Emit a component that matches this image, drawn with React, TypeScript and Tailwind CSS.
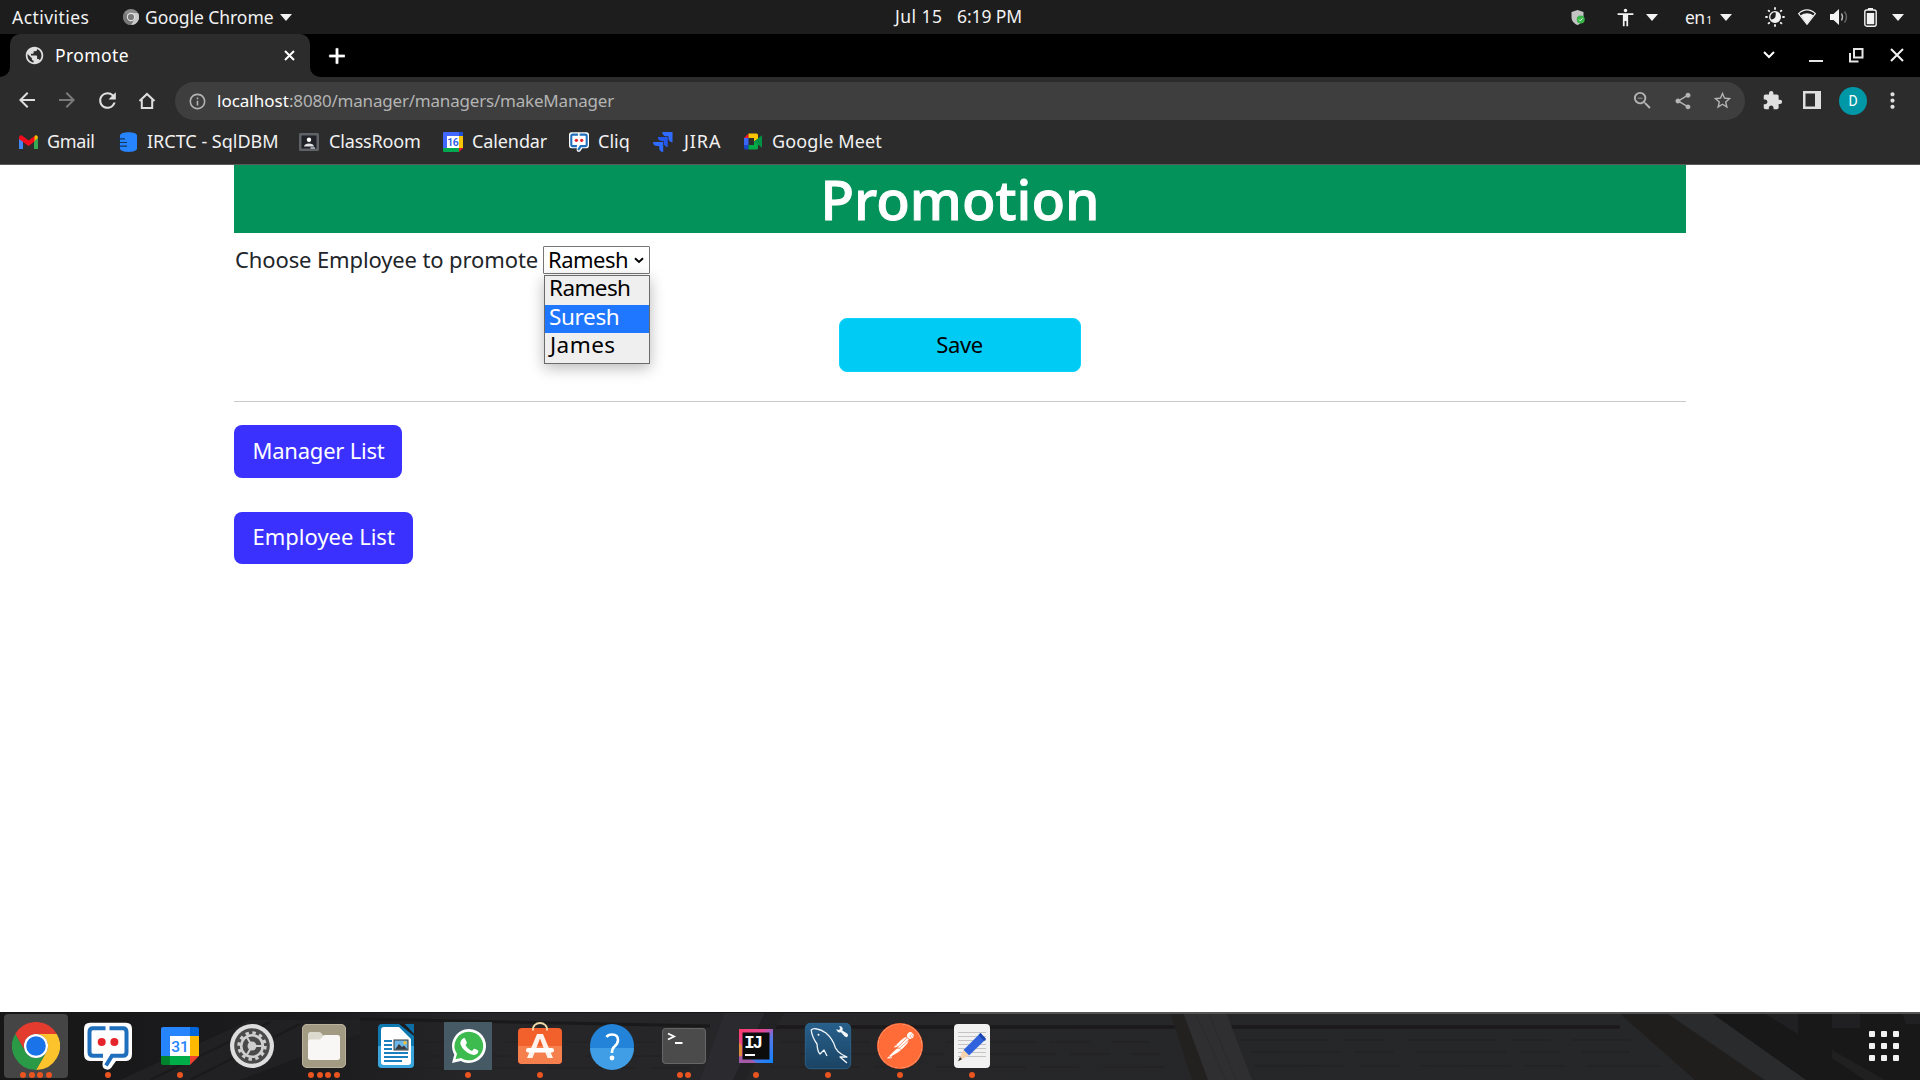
import React from "react";
import {
  MdAccessibility, MdAdd, MdArrowBack, MdArrowForward, MdExtension, MdInfoOutline,
  MdMoreVert, MdPublic, MdRefresh, MdShare, MdStarBorder, MdZoomOut,
} from "react-icons/md";
import { SiPostman } from "react-icons/si";

/* ---------- helpers ---------- */

function Caret({ className }: { className: string }) {
  return (
    <svg viewBox="0 0 12 7" className={`h-[7px] w-3 shrink-0 ${className}`}>
      <path d="M0 0H12L6 7Z" fill="#f2f2f2" />
    </svg>
  );
}

/* Fixed-size cell that keeps its icon centred. */
function Cell({ className, children }: { className: string; children: React.ReactNode }) {
  return <span className={`flex shrink-0 items-center justify-center ${className}`}>{children}</span>;
}

/* ---------- GNOME top bar ---------- */

function TopBar() {
  return (
    <header className="flex h-[34px] items-center bg-[#1d1d1d] pr-4 pl-3 text-[17.5px] leading-none whitespace-nowrap text-[#f2f2f2]">
      <span className="w-[77px] shrink-0 pt-0.5 tracking-[0.45px]">Activities</span>
      <svg viewBox="0 0 16 16" className="ml-[34px] size-4 shrink-0">
        <circle cx="8" cy="8" r="8" fill="#8b8b8b" />
        <path d="M8 4H15A8 8 0 0 1 8 16L11.4 10Z" fill="#c9c9c9" />
        <path d="M1.2 4A8 8 0 0 0 8 16L11 10.5Z" fill="#777" />
        <circle cx="8" cy="8" r="4.2" fill="#e4e4e4" />
        <circle cx="8" cy="8" r="3.1" fill="#777" />
      </svg>
      <span className="ml-1.5 w-[129px] shrink-0 pt-0.5 tracking-[-0.05px]">Google Chrome</span>
      <Caret className="ml-1.5" />
      <span className="ml-[603px] w-[49px] shrink-0 pb-px text-[17.5px] tracking-[0.45px]">Jul 15</span>
      <span className="ml-[13px] w-[66px] shrink-0 pb-px text-[17.5px] tracking-[-0.1px]">6:19 PM</span>

      <div className="ml-auto flex items-center">
        <svg viewBox="0 0 14 15" className="h-[15px] w-3.5">
          <path d="M6.5 0L12.5 2V7C12.5 11 10 13.5 6.5 15C3 13.5.5 11 .5 7V2Z" fill="#c4c4c4" />
          <circle cx="9.7" cy="9.5" r="4" fill="#39b54a" />
          <path d="M7.9 9.5L9.2 10.8L11.6 8.3" stroke="#e8ffe8" strokeWidth="1" fill="none" />
        </svg>
        <Cell className="ml-[32px] h-[22px] w-[16px]">
          <MdAccessibility className="size-[21px] shrink-0" />
        </Cell>
        <Caret className="ml-[13px]" />
        <span className="ml-[27px] w-[21px] pt-0.5 text-[17.5px] tracking-[-0.6px]">en</span>
        <span className="mt-[5px] w-[7px] text-[11px]">1</span>
        <Caret className="ml-[7px]" />
        <svg viewBox="0 0 20 20" className="ml-[33px] size-5 text-[#f2f2f2]">
          <g stroke="currentColor" strokeWidth="1.8" strokeLinecap="round">
            <path d="M10 1V2M10 18V19M1 10H2M18 10H19M3.6 3.6L4.2 4.2M15.8 15.8L16.4 16.4M3.6 16.4L4.2 15.8M15.8 4.2L16.4 3.6" />
          </g>
          <circle cx="10" cy="10" r="5.3" fill="none" stroke="currentColor" strokeWidth="1.3" />
          <path d="M10.5 4.7A5.3 5.3 0 0 1 10 15.3A5.3 5.3 0 0 1 5.5 12.8Q12 12.500 10.500 4.700Z" fill="currentColor" />
        </svg>
        <svg viewBox="0 0 18 16" className="ml-[13px] h-4 w-[18px]">
          <path d="M.6 4.6C5.5-.3 12.500-.3 17.400 4.600L9 15.300Z" fill="none" stroke="#f2f2f2" strokeWidth="1.200" />
          <path d="M2.600 6.600C6.500 3.500 11.500 3.500 15.400 6.600L9 15Z" fill="#f2f2f2" />
        </svg>
        <svg viewBox="0 0 18 18" className="ml-3.5 size-[18px]">
          <path d="M0 6H3.500L9 1V17L3.500 12H0Z" fill="#f2f2f2" />
          <path d="M11.500 5.500Q13.500 9 11.500 12.500" fill="none" stroke="#bbb" strokeWidth="1.400" />
          <path d="M14.500 3.500Q18.500 9 14.500 14.500" fill="none" stroke="#666" strokeWidth="1.400" />
        </svg>
        <svg viewBox="0 0 13 19" className="ml-4 h-[19px] w-[13px]">
          <rect x="4" y="0" width="5" height="2" fill="#f2f2f2" />
          <rect x=".8" y="2" width="11.400" height="16.200" rx="2" fill="none" stroke="#f2f2f2" strokeWidth="1.400" />
          <rect x="2.800" y="5" width="7.400" height="11.200" fill="#f2f2f2" />
        </svg>
        <Caret className="ml-[15px]" />
      </div>
    </header>
  );
}

/* ---------- Chrome window ---------- */

function TabStrip() {
  return (
    <div className="flex h-[43px] items-center bg-black text-[#f1f1f1]">
      <div className="relative ml-2.5 flex h-full w-[300px] items-center rounded-t-[10px] bg-[#2c2c2c] pl-3.5">
        <svg viewBox="0 0 10 10" className="absolute bottom-0 -left-2.5 size-2.5">
          <path d="M10 0V10H0A10 10 0 0 0 10 0Z" fill="#2c2c2c" />
        </svg>
        <svg viewBox="0 0 10 10" className="absolute -right-2.5 bottom-0 size-2.5">
          <path d="M0 0V10H10A10 10 0 0 1 0 0Z" fill="#2c2c2c" />
        </svg>
        <MdPublic className="size-[21px] shrink-0 text-[#dfdfdf]" />
        <span className="ml-2.5 w-[75px] text-[17.5px] leading-none tracking-[0.4px] text-white">Promote</span>
        <svg viewBox="0 0 11 11" className="ml-[154px] size-[11px] shrink-0">
          <path d="M1 1L10 10M10 1L1 10" stroke="white" strokeWidth="2" />
        </svg>
      </div>
      <MdAdd className="ml-[14px] size-[26px] shrink-0 stroke-white text-white [stroke-width:0] [&>path:last-child]:[stroke-width:0.6]" />
      <div className="ml-auto flex items-center pr-4 pb-px">
        <svg viewBox="0 0 12 8" className="h-2 w-3">
          <path d="M1 1L6 6L11 1" fill="none" stroke="white" strokeWidth="2" />
        </svg>
        <span className="mt-3 ml-[34px] h-0.5 w-[14px] bg-[#e6e6e6]" />
        <svg viewBox="0 0 15 15" className="ml-[26px] size-[15px]">
          <path d="M5 1H13.500V9.500H5Z" fill="none" stroke="#e6e6e6" strokeWidth="2" />
          <path d="M1 5V13.500H9.500" fill="none" stroke="#e6e6e6" strokeWidth="2" />
        </svg>
        <svg viewBox="0 0 14 14" className="ml-[26px] size-[14px]">
          <path d="M1 1L13 13M13 1L1 13" stroke="#f1f1f1" strokeWidth="2" />
        </svg>
      </div>
    </div>
  );
}

function Toolbar() {
  return (
    <div className="flex h-12 items-center text-[#dfdfdf]">
      <Cell className="ml-[15px] w-6 pb-0.5"><MdArrowBack className="size-[24px]" /></Cell>
      <Cell className="ml-4 w-6 pb-0.5 text-[#7a7a7a]"><MdArrowForward className="size-[24px]" /></Cell>
      <Cell className="ml-4 w-6 pb-0.5"><MdRefresh className="size-[25px] shrink-0" /></Cell>
      <Cell className="ml-4 w-6 pb-px">
        <svg viewBox="0 0 18 18" className="size-[18px]">
          <path d="M1.500 9L9 1.900L16.500 9" fill="none" stroke="currentColor" strokeWidth="2" />
          <path d="M3.800 7.500V15.900H14.200V7.500" fill="none" stroke="currentColor" strokeWidth="2" />
        </svg>
      </Cell>
      <div className="ml-4 flex h-[38px] w-[1570px] items-center rounded-full bg-[#3e3e3e] text-[#b4b4b4]">
        <MdInfoOutline className="ml-[13px] size-[19px] shrink-0" />
        <span className="ml-2.5 flex pb-0.5 text-[17px] leading-none whitespace-nowrap">
          <span className="w-[72px] text-white">localhost</span>
          <span className="tracking-[-0.2px]">:8080/manager/managers/makeManager</span>
        </span>
        <div className="ml-auto flex items-center pb-px">
          <MdZoomOut className="size-[23px]" />
          <MdShare className="ml-[19px] size-5" />
          <MdStarBorder className="mr-[12px] ml-[19px] size-[21px]" />
        </div>
      </div>
      <MdExtension className="mb-px ml-[17px] size-[21px]" />
      <svg viewBox="0 0 18 18" className="mb-0.5 ml-5 size-[18px]">
        <path fillRule="evenodd" d="M0 0H18V18H0ZM2.500 2.500V15.500H12V2.500Z" fill="currentColor" />
      </svg>
      <Cell className="ml-[18px] size-7 rounded-full bg-[#0097a7] font-['Roboto'] text-[14px] text-white">D</Cell>
      <MdMoreVert className="mb-px ml-[13px] size-[25px]" />
    </div>
  );
}

function Bookmarks() {
  return (
    <nav className="flex h-[33px] items-center text-[18px] leading-none whitespace-nowrap text-[#f1f1f1]">
      <svg viewBox="0 0 19 14" className="ml-[19px] h-3.5 w-[19px]">
        <path d="M0 3V14H4V6Z" fill="#4285f4" />
        <path d="M19 3V14H15V6Z" fill="#34a853" />
        <path d="M15 2L16 .6Q19-.5 19 3L15 6.500Z" fill="#fbbc04" />
        <path d="M0 3Q0-.5 3 .6L9.500 5.500L15.500 1V6.500L9.500 11L0 4Z" fill="#f50c1c" />
      </svg>
      <span className="ml-[9px] w-[52px] pb-0.5 tracking-[-0.35px]">Gmail</span>

      <svg viewBox="0 0 20 20" className="ml-[19px] size-5">
        <path d="M2 3.500C2-1 19-1 19 3.500V16.500C19 21 2 21 2 16.500Z" fill="#2684ff" />
        <path d="M0 6.800H7M1.500 10.500H9M0 14.200H9" stroke="#12355f" strokeWidth="1.200" />
      </svg>
      <span className="ml-[9px] w-[132px] pb-0.5">IRCTC - SqlDBM</span>

      <svg viewBox="0 0 20 18" className="ml-5 h-[18px] w-5">
        <rect width="20" height="18" rx="1.500" fill="#5f6368" />
        <rect x="2.500" y="2.500" width="15" height="13" fill="#1f2226" />
        <circle cx="10" cy="6.800" r="2.200" fill="white" />
        <path d="M5 13.500C5 9.500 15 9.500 15 13.500Z" fill="#dfe3e6" />
        <rect x="11.500" y="14" width="4.500" height="2" fill="#9aa0a6" />
      </svg>
      <span className="ml-2.5 w-[93px] pb-0.5 tracking-[-0.16px]">ClassRoom</span>

      <svg viewBox="0 0 20 20" className="ml-[21px] size-5">
        <path d="M0 1Q0 0 1 0H16V4H4V16H0Z" fill="#4169ff" />
        <path d="M16 0H19Q20 0 20 1V4H16Z" fill="#1d4fd8" />
        <path d="M16 4H20V16H16Z" fill="#ffc400" />
        <path d="M0 16H16V20H1Q0 20 0 19Z" fill="#00a94f" />
        <path d="M16 16H20L16 20Z" fill="#f5112a" />
        <rect x="4" y="4" width="12" height="12" fill="white" />
        <text x="9.800" y="13.800" fontSize="10.500" textAnchor="middle" fontFamily="Roboto" fontWeight="600" letterSpacing="-.5" fill="#2b5ce6">16</text>
      </svg>
      <span className="ml-[9px] w-[76px] pb-0.5 tracking-[-0.1px]">Calendar</span>

      <svg viewBox="0 0 48 48" className="ml-[21px] size-[20px]">
        <CliqShape stroke={5} />
      </svg>
      <span className="ml-[9px] w-[33px] pb-0.5">Cliq</span>

      <svg viewBox="0 0 20 20" className="ml-[22px] size-5">
        <path d="M9.200 0H19.500V10.300C17 10.300 15.500 8.600 15.500 6.300V4.200H13.400C10.800 4.200 9.200 2.500 9.200 0Z" fill="#2f6bff" />
        <path d="M4.800 5H14.800V15C12.200 15 10.800 13.300 10.800 11V9.100H8.900C6.400 9.100 4.800 7.500 4.800 5Z" fill="#2456e8" />
        <path d="M0 9.900H10.200V20C7.600 20 6.200 18.300 6.200 16V14H4.200C1.600 14 0 12.400 0 9.900Z" fill="#2f6bff" />
      </svg>
      <span className="ml-[11px] w-[39px] pb-0.5 tracking-[0.9px]">JIRA</span>

      <svg viewBox="0 0 18 16" className="ml-[21px] h-[17px] w-[18px]">
        <path d="M0 4.500L4.500 0V4.500Z" fill="#f5112a" />
        <path d="M0 4.500H4.500V11.500H0Z" fill="#3b66f5" />
        <path d="M0 11.500H4.500V16H1.500Q0 16 0 14.500Z" fill="#1746c8" />
        <path d="M4.500 0H12.500Q14 0 14 1.500V6L10 8V4.500H4.500Z" fill="#ffc400" />
        <path d="M4.500 11.500H10V8L14 6V14.500Q14 16 12.500 16H4.500Z" fill="#00ac47" />
        <path d="M10 8L18 1.800V14.200Z" fill="#009245" />
      </svg>
      <span className="ml-[10px] pb-0.5 tracking-[0.12px]">Google Meet</span>
    </nav>
  );
}

/* ---------- Page ---------- */

function Page() {
  return (
    <main className="flex-1 bg-white px-[234px] text-[22px] leading-none text-[#212529]">
      <h1 className="flex h-[68px] w-[1452px] items-center justify-center bg-[#039259] pb-0.5 text-[55px] font-medium text-white [-webkit-text-stroke:0.9px_white]">
        Promotion
      </h1>
      <div className="mt-[13px] flex h-7 items-center whitespace-nowrap">
        <span className="w-[309px] pb-0.5 pl-px tracking-[-0.12px]">Choose Employee to promote</span>
        <div className="relative flex h-7 w-[107px] items-center rounded-[1px] border border-[#767676] bg-white pl-1 text-black">
          <span className="w-[80px] pb-0.5 tracking-[-0.5px]">Ramesh</span>
          <svg viewBox="0 0 10 7" className="ml-[6px] h-[7px] w-2.5">
            <path d="M1 1.200L5 5L9 1.200" fill="none" stroke="black" strokeWidth="1.900" />
          </svg>
          <ul className="absolute top-7 left-0 h-[89px] w-[106px] border border-[#6b6b6b] bg-[#efefef] text-[22.5px] shadow-[0_4px_14px_rgba(0,0,0,0.28)]">
            <li className="flex h-[29px] items-center pb-1 pl-1 tracking-[-0.6px]">Ramesh</li>
            <li className="flex h-7 items-center bg-[#1f76ff] pb-1 pl-1 tracking-[-0.35px] text-white">Suresh</li>
            <li className="flex h-[30px] items-center pb-1.5 pl-[5px] tracking-[0.45px]">James</li>
          </ul>
        </div>
      </div>
      <button className="mx-auto mt-[44px] flex h-[54px] w-[242px] items-center justify-center rounded-[8px] border border-[#0dd3fb] bg-[#00cbf5] pr-px pb-0.5 tracking-[-0.4px] text-black">
        Save
      </button>
      <hr className="mt-[29px] w-[1452px] border-[#c8c9ca]" />
      <div className="flex flex-col items-start gap-[34px] pt-[23px] text-white">
        <a className="flex h-[53px] w-[168px] items-center rounded-[8px] bg-[#3a31ff] pb-1 pl-[18.5px] tracking-[-0.22px]">Manager List</a>
        <a className="flex h-[52px] w-[179px] items-center rounded-[8px] bg-[#3a31ff] pb-1 pl-[18.5px]">Employee List</a>
      </div>
    </main>
  );
}

/* ---------- Dock icons, each on a 48px grid ---------- */

function CliqShape({ stroke }: { stroke: number }) {
  return (
    <>
      <path d="M6 .8H42Q48 .8 48 6.800V32Q48 39 42 39H32L27 46Q24 49 20 46.500Q17.500 44 19 39H6Q0 39 0 32V6.800Q0 .8 6 .8Z" fill="white" />
      <g fill="none" stroke="#1f6fbd" strokeWidth={stroke}>
        <path d="M21.500 6.300H9Q5.500 6.300 5.500 10V30Q5.500 33.800 9 33.800H19" />
        <path d="M25.500 6.300H39Q42.500 6.300 42.500 10V30Q42.500 33.800 39 33.800H28L22 43.500" />
      </g>
      <circle cx="17.700" cy="20" r="4" fill="#e5252b" />
      <circle cx="30.400" cy="20" r="4" fill="#e5252b" />
    </>
  );
}

const chrome = (
  <>
    <path d="M24 12H44.800A24 24 0 0 0 3.200 12L13.600 30A12 12 0 0 1 24 12Z" fill="#e33b2e" />
    <path d="M44.800 12A24 24 0 0 1 24 48L34.400 30A12 12 0 0 0 24 12Z" fill="#fcc32c" />
    <path d="M3.200 12A24 24 0 0 0 24 48L34.400 30A12 12 0 0 1 13.600 30Z" fill="#2b9a47" />
    <circle cx="24" cy="24" r="12" fill="white" />
    <circle cx="24" cy="24" r="9.800" fill="#1a73e8" />
  </>
);

const calendar = (
  <>
    <path d="M5 7Q5 5 7 5H34V14H14V34H5Z" fill="#2684fc" />
    <path d="M34 5H41Q43 5 43 7V14H34Z" fill="#0066da" />
    <path d="M34 14H43V34H34Z" fill="#ffba00" />
    <path d="M5 34H14V43H7Q5 43 5 41Z" fill="#00832d" />
    <path d="M14 34H34V43H14Z" fill="#00ac47" />
    <path d="M34 34H43L34 43Z" fill="#ee4130" />
    <path d="M14 14H34V34H14Z" fill="white" />
    <text x="24" y="29.600" fontSize="15.500" textAnchor="middle" fontFamily="Roboto" fontWeight="500" fill="#2684fc">31</text>
  </>
);

const settings = (
  <>
    <circle cx="24" cy="24" r="22" fill="#dedede" />
    <circle cx="24" cy="24" r="17.800" fill="#4a4a4a" />
    <circle cx="24" cy="24" r="13.200" fill="none" stroke="#cfcfcf" strokeWidth="3" strokeDasharray="3.400 3.512" />
    <circle cx="24" cy="24" r="10.800" fill="none" stroke="#cfcfcf" strokeWidth="2.600" />
    <path d="M24 24H34M24 24L19 32.700M24 24L19 15.300" stroke="#cfcfcf" strokeWidth="2" />
    <circle cx="24" cy="24" r="4.500" fill="#cfcfcf" />
  </>
);

const files = (
  <>
    <rect x="2" y="2" width="44" height="44" rx="5" fill="#a39a84" />
    <rect x="2.500" y="2.500" width="43" height="43" rx="4.500" fill="none" stroke="#b9b19c" />
    <path d="M8 13Q8 10 10.500 10H19Q21 10 22 12L23.500 14H37V30H8Z" fill="#dcd9cf" />
    <path d="M8 20Q8 17.500 10.500 17.500H20L24 13H37.500Q40 13 40 15.500V35.500Q40 38 37.500 38H10.500Q8 38 8 35.500Z" fill="#f8f7f5" />
  </>
);

const writer = (
  <>
    <path d="M10 2H42V42Q42 46 38 46H10Q6 46 6 42V6Q6 2 10 2Z" fill="#0e78b0" />
    <path d="M6 24H42V42Q42 46 38 46H10Q6 46 6 42Z" fill="#3aa5dc" />
    <path d="M27 2H33L42 12V14Z" fill="#1c1c1e" />
    <path d="M33 2H42V11Z" fill="#0e6da3" />
    <path d="M12 5H27L39 17V40Q39 43 36 43H12Q9 43 9 40V8Q9 5 12 5Z" fill="white" />
    <path d="M12 19H20M12 23H20M12 27H20M12 31H36M12 35H36M12 39H30" stroke="#1c7fc0" strokeWidth="1.900" />
    <rect x="22" y="18" width="14" height="10" fill="#6cb6ea" stroke="#3b3b3b" />
    <path d="M23 27.500L27 22L30 25L32 23.500L35.500 27.500Z" fill="#3b3b3b" />
    <circle cx="33" cy="20.700" r="1.700" fill="#f4c430" />
  </>
);

const whatsapp = (
  <>
    <rect width="48" height="48" fill="#455a64" />
    <path d="M25 7A17 17 0 1 1 16.800 38.900L8 41L10.300 32.500A17 17 0 0 1 25 7Z" fill="white" />
    <path d="M25 9.700A14.300 14.300 0 1 1 17 35.900L11.500 37.300L13 32A14.300 14.300 0 0 1 25 9.700Z" fill="#3dbb4e" />
    <path d="M19 16.500Q20.500 15.500 21.300 17L22.800 20.500Q23 21.500 21.500 23Q24 27.500 28 29L30 26.700Q31 26.300 34 28.300Q35 29 33.500 31.500Q31 33.800 27 32.300Q19.500 29.500 16.500 22.500Q15.800 18.800 19 16.500Z" fill="white" />
  </>
);

const software = (
  <>
    <rect x="2" y="6" width="44" height="36" rx="4" fill="#f2602b" />
    <path d="M2 24H46V38Q46 42 42 42H6Q2 42 2 38Z" fill="#f5804e" />
    <path d="M17 8.500C16-1.500 32-1.500 31 8.500" fill="none" stroke="#f0d9a8" strokeWidth="1.900" />
    <path d="M21 12H27L37 36H31.500L24 16.500L16.500 36H11Z" fill="#fdf3ec" />
    <rect x="10" y="26" width="28" height="4.600" rx="2.300" fill="white" />
  </>
);

const help = (
  <>
    <circle cx="24" cy="24" r="22" fill="#2283d8" />
    <path d="M2 26H46A22 22 0 0 1 2 26Z" fill="#3f9ee6" />
    <path d="M18.500 15Q20 12.500 24 12.500Q30 12.500 30 18Q30 21.500 26.500 24.500Q24 26.500 24 31" fill="none" stroke="white" strokeWidth="2.600" />
    <circle cx="24" cy="36" r="2.400" fill="white" />
  </>
);

const terminal = (
  <>
    <rect x="2" y="6" width="44" height="36" rx="4" fill="#4b4b4b" />
    <rect x="2.500" y="6.500" width="43" height="35" rx="3.500" fill="none" stroke="#666" />
    <path d="M8 11.500L14 14.500L8 17.500M15 21H22.500" fill="none" stroke="white" strokeWidth="1.900" />
  </>
);

const intellij = (
  <>
    <defs>
      <linearGradient id="ij" x1="0" y1="0" x2="1" y2="1">
        <stop offset="0" stopColor="#ff3b6b" /><stop offset=".4" stopColor="#e0489a" />
        <stop offset=".6" stopColor="#5a78e8" /><stop offset="1" stopColor="#0a84ff" />
      </linearGradient>
    </defs>
    <rect x="7" y="7" width="34" height="34" fill="url(#ij)" />
    <path d="M7 20L10 24V33L7 37Z" fill="#e08a3c" />
    <path d="M7 34L20 38L25 41H7Z" fill="#a35aa8" />
    <rect x="10.500" y="10.500" width="27" height="27" fill="#0c0c0c" />
    <rect x="13" y="32" width="10" height="2" fill="white" />
    <text x="12.300" y="26" fontSize="17.500" fontFamily="Liberation Mono" fontWeight="700" fill="white" letterSpacing="-2.200">IJ</text>
  </>
);

const workbench = (
  <>
    <defs>
      <linearGradient id="wb" x1="0" y1="0" x2="0" y2="1">
        <stop offset="0" stopColor="#27608c" /><stop offset="1" stopColor="#1b4363" />
      </linearGradient>
    </defs>
    <rect x="1.300" y="1.300" width="45.400" height="45.400" rx="5" fill="url(#wb)" stroke="#2f6f9e" strokeWidth=".7" />
    <path
      d="M23 34L20 28L16 32Q13.500 30 13 22Q8 15 7.200 8Q9 6 13 7Q17 7.500 22 11Q29 17 31.500 26Q33.500 30 38 32.500L43 35L36 35L43 41"
      fill="none" stroke="#f0f6fa" strokeWidth="1.300" strokeLinejoin="round"
    />
    <circle cx="14.500" cy="12.800" r="1" fill="white" />
    <path d="M35 4Q38.500 4 38.800 7L38.300 8.500L43.200 11.500Q45 13.500 43 15Q41.500 15.500 40.300 14L37 10.300Q33 11 32.300 7.300L35 8L36.300 6.500Z" fill="#f0f6fa" />
  </>
);

const editor = (
  <>
    <rect x="6" y="2" width="36" height="44" rx="4" fill="#f1f1f1" />
    <path d="M10 10.500H38M10 14.500H38M10 18.500H38M10 22.500H38M10 26.500H38M10 30.500H38M10 34.500H38" stroke="#c4c4c4" />
    <path d="M32.500 11L38 17L21 33.500L15.500 28Z" fill="#2f62dc" />
    <path d="M30.500 13L36 19L38 17L32.500 11Z" fill="#1b46b0" />
    <path d="M15.500 28L21 33.500L10.500 39Z" fill="#f7d3ae" />
    <path d="M12 35L14 37.300L10 39.300Z" fill="#333" />
  </>
);

const dock: { art: React.ReactNode; dots: number; active?: boolean }[] = [
  { art: chrome, dots: 4, active: true },
  { art: <CliqShape stroke={4} />, dots: 1 },
  { art: calendar, dots: 1 },
  { art: settings, dots: 0 },
  { art: files, dots: 4 },
  { art: writer, dots: 0 },
  { art: whatsapp, dots: 1 },
  { art: software, dots: 1 },
  { art: help, dots: 0 },
  { art: terminal, dots: 2 },
  { art: intellij, dots: 1 },
  { art: workbench, dots: 1 },
  { art: null, dots: 1 },
  { art: editor, dots: 1 },
];

/* Dark wooden wallpaper seen through the dock. */
function Wallpaper() {
  return (
    <svg viewBox="0 0 1920 68" preserveAspectRatio="none" className="absolute inset-0 h-full w-full">
      <defs>
        <linearGradient id="wood" x1="0" y1="0" x2="1" y2="0">
          <stop offset="0" stopColor="#171718" /><stop offset=".17" stopColor="#1c1c1e" />
          <stop offset=".25" stopColor="#262629" /><stop offset="1" stopColor="#262728" />
        </linearGradient>
      </defs>
      <rect width="1920" height="68" fill="url(#wood)" />
      <path d="M120 68L250 8H360V22L240 68Z" fill="#212123" />
      <path d="M150 68L270 10M190 68L300 12" stroke="#1a1a1b" strokeWidth="2" />
      <path d="M360 7L710 14" stroke="#1a191a" strokeWidth="3" />
      <path d="M775 15H1620" stroke="#1b191a" strokeWidth="3.500" />
      <g stroke="#212123" strokeWidth="1">
        <path d="M400 30H690M420 44H700M380 56H690M780 30H1150M800 42H1160M770 55H1165M1240 28H1630M1250 40H1630M1255 54H1660" strokeDasharray="90 14 40 22" />
      </g>
      <path d="M725 0H785L745 68H700Z" fill="#2b2b2f" />
      <path d="M765 0H785L745 68H733Z" fill="#222224" />
      <path d="M1170 0H1184L1208 68H1192Z" fill="#232120" />
      <path d="M1183 0H1226L1252 68H1208Z" fill="#2f2f31" />
      <path d="M1195 0L1226 68M1208 0L1236 68" stroke="#2b2b2d" />
      <path d="M1660 0H1920V68H1800Z" fill="#181818" />
      <path d="M1618 0H1665L1765 68H1695Z" fill="#201e1d" />
      <path d="M1665 0H1710L1806 68H1765Z" fill="#2a2b2d" />
      <path d="M1762 0H1798V22L1775 8Z" fill="#202023" />
      <path d="M1832 0H1860V16H1832ZM1902 0H1920V12H1906Z" fill="#202023" />
      <path d="M1832 38L1885 68H1865L1832 46Z" fill="#202021" />
    </svg>
  );
}

function Dock() {
  return (
    <footer className="relative h-[68px] overflow-hidden bg-[#242426]">
      <Wallpaper />
      <div className="relative flex h-full items-start">
        {dock.map((item, i) => (
          <div key={i} className="flex w-[72px] justify-center pt-0.5">
            <div className={`flex h-16 w-16 flex-col items-center rounded-[4px] pt-2 ${item.active ? "bg-[#454545]" : ""}`}>
              {item.art ? (
                <svg viewBox="0 0 48 48" className="size-12 shrink-0">{item.art}</svg>
              ) : (
                <span className="flex size-12 shrink-0 items-center justify-center">
                  <span className="flex size-[46px] items-center justify-center rounded-full bg-[#ff6c37]">
                    <span className="size-[44px] rounded-full bg-white">
                      <SiPostman className="size-[44px] text-[#ff6c37]" />
                    </span>
                  </span>
                </span>
              )}
              <div className="mt-0.5 flex gap-[2.7px]">
                {Array.from({ length: item.dots }, (_, d) => (
                  <span key={d} className="size-1.5 rounded-full bg-[#e95420]" />
                ))}
              </div>
            </div>
          </div>
        ))}
        <div className="mt-[19px] mr-[21px] ml-auto grid grid-cols-3 gap-1.5">
          {Array.from({ length: 9 }, (_, d) => (
            <span key={d} className="size-1.5 rounded-[1px] bg-[#f2f2f2]" />
          ))}
        </div>
      </div>
      <div className="absolute top-0 left-0 h-px w-[960px] bg-[#161616]" />
      <div className="absolute top-0 right-0 h-0.5 w-[960px] bg-[#555555]" />
    </footer>
  );
}

export default function App() {
  return (
    <div className="flex h-[1080px] w-[1920px] flex-col overflow-hidden font-['Noto_Sans',sans-serif]">
      <TopBar />
      <TabStrip />
      <div className="h-[88px] border-b border-[#5a5a5a] bg-[#2c2c2c]">
        <Toolbar />
        <Bookmarks />
      </div>
      <Page />
      <Dock />
    </div>
  );
}
